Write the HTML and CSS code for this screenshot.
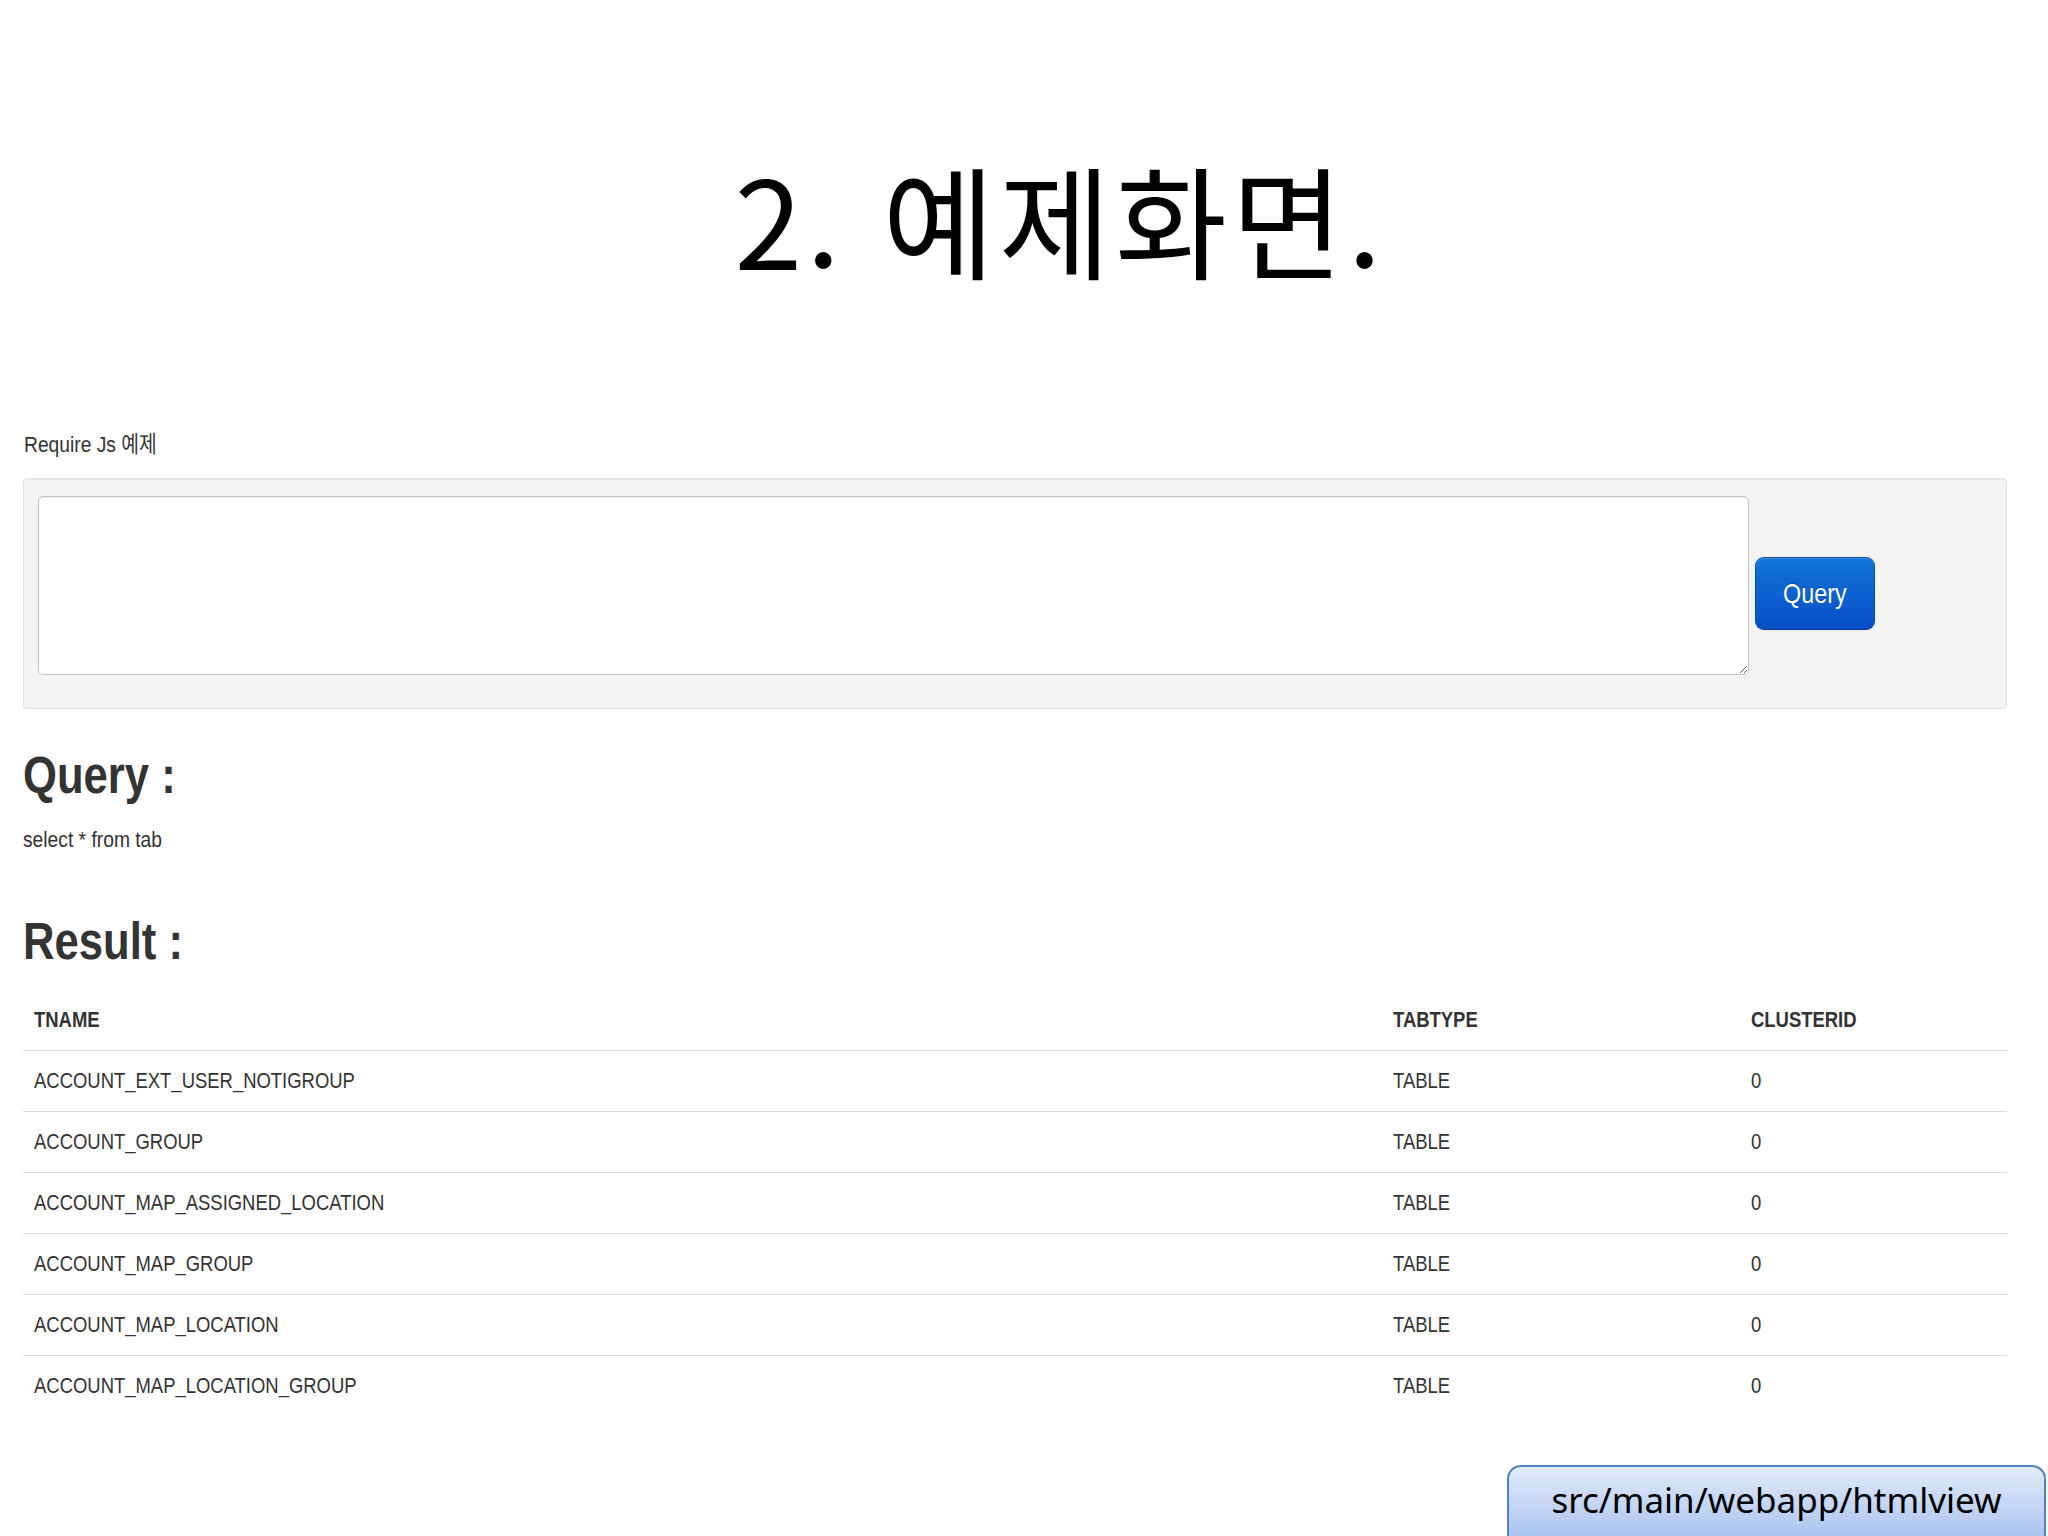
FILE: index.html
```html
<!DOCTYPE html>
<html lang="ko">
<head>
<meta charset="utf-8">
<title>2. 예제화면.</title>
<link rel="stylesheet" href="styles.css">
</head>
<body>
  <h1 class="slide-title">2. 예제화면.</h1>

  <div class="shot">
    <p class="intro"><span class="sq sq-w">Require Js 예제</span></p>

    <div class="well">
      <textarea class="query-input"></textarea>
      <button class="btn-query" type="button"><span class="sq sq-c">Query</span></button>
    </div>

    <h2 class="sec"><span class="sq sq-w">Query :</span></h2>
    <p class="sql"><span class="sq sq-w">select * from tab</span></p>

    <h2 class="sec result-title"><span class="sq sq-w">Result :</span></h2>
    <table class="result-table">
      <colgroup>
        <col class="c-name">
        <col class="c-type">
        <col class="c-id">
      </colgroup>
      <thead>
        <tr><th><span class="sq">TNAME</span></th><th><span class="sq">TABTYPE</span></th><th><span class="sq">CLUSTERID</span></th></tr>
      </thead>
      <tbody>
        <tr><td><span class="sq">ACCOUNT_EXT_USER_NOTIGROUP</span></td><td><span class="sq">TABLE</span></td><td><span class="sq">0</span></td></tr>
        <tr><td><span class="sq">ACCOUNT_GROUP</span></td><td><span class="sq">TABLE</span></td><td><span class="sq">0</span></td></tr>
        <tr><td><span class="sq">ACCOUNT_MAP_ASSIGNED_LOCATION</span></td><td><span class="sq">TABLE</span></td><td><span class="sq">0</span></td></tr>
        <tr><td><span class="sq">ACCOUNT_MAP_GROUP</span></td><td><span class="sq">TABLE</span></td><td><span class="sq">0</span></td></tr>
        <tr><td><span class="sq">ACCOUNT_MAP_LOCATION</span></td><td><span class="sq">TABLE</span></td><td><span class="sq">0</span></td></tr>
        <tr><td><span class="sq">ACCOUNT_MAP_LOCATION_GROUP</span></td><td><span class="sq">TABLE</span></td><td><span class="sq">0</span></td></tr>
      </tbody>
    </table>
  </div>

  <div class="callout">src/main/webapp/htmlview</div>
</body>
</html>
```

FILE: styles.css
```css
html {
  overflow: hidden;
  background: #fff;
}

body {
  margin: 0;
  position: relative;
  min-height: 1536px;
  font-family: "Liberation Sans", Arial, "Noto Sans CJK KR", sans-serif;
  color: #333;
  background: #fff;
}

.slide-title {
  margin: 144px 0 0;
  padding-left: 72px;
  text-align: center;
  font-family: "Noto Sans CJK KR", "Noto Sans", sans-serif;
  font-weight: 400;
  font-size: 122px;
  line-height: 146px;
  letter-spacing: 4px;
  color: #000;
}

/* the pasted browser screenshot is horizontally squeezed: text glyphs are narrowed */
.shot {
  margin: 139px 0 0 23px;
  width: 1984px;
  font-size: 22.5px;
  line-height: 32.4px;
}

.sq {
  display: inline-block;
  white-space: nowrap;
  transform: scaleX(0.82);
  transform-origin: 0 50%;
}

.sq-w {
  transform: scaleX(0.855);
}

.sq-c {
  transform-origin: 50% 50%;
}

.intro {
  margin: 0 0 17px 1px;
}

.well {
  display: flex;
  align-items: flex-start;
  padding: 17px 0 33px 14px;
  background: #f4f4f4;
  border: 1px solid #e3e3e3;
  border-radius: 4px;
  box-shadow: inset 0 1px 1px rgba(0, 0, 0, 0.05);
  margin-bottom: 34px;
}

.query-input {
  display: block;
  box-sizing: border-box;
  width: 1711px;
  height: 179px;
  margin: 0;
  padding: 6px;
  border: 1px solid #c4c4c4;
  border-radius: 5px;
  background: #fff;
  box-shadow: inset 0 1px 1px rgba(0, 0, 0, 0.075);
  font: inherit;
}

.btn-query {
  box-sizing: border-box;
  width: 120px;
  height: 73px;
  margin: 61px 0 0 6px;
  padding: 0;
  text-align: center;
  font-family: "Liberation Sans", Arial, sans-serif;
  font-size: 28.5px;
  line-height: 33px;
  color: #fff;
  background-color: #0a5fd0;
  background-image: linear-gradient(to bottom, #1274d9, #064ec6);
  border: 1px solid;
  border-color: #0a4fb8 #0a4fb8 #063c99;
  border-radius: 9px;
  text-shadow: 0 -1px 0 rgba(0, 0, 0, 0.25);
  box-shadow: inset 0 1px 0 rgba(255, 255, 255, 0.2), 0 1px 2px rgba(0, 0, 0, 0.05);
}

.sec {
  margin: 0;
  font-size: 51px;
  line-height: 65px;
  font-weight: bold;
  color: #333;
}

.sql {
  margin: 16px 0 0;
}

.result-title {
  margin-top: 52px;
}

.result-table {
  margin-top: 16px;
  width: 100%;
  table-layout: fixed;
  border-collapse: collapse;
  border-spacing: 0;
}

.c-name { width: 1359px; }
.c-type { width: 358px; }
.c-id { width: 267px; }

.result-table th,
.result-table td {
  padding: 14px 11px;
  line-height: 32px;
  text-align: left;
  vertical-align: top;
}

.result-table th {
  font-weight: bold;
  vertical-align: bottom;
}

.result-table td {
  border-top: 1px solid #dcdcdc;
}

.callout {
  position: absolute;
  left: 1507px;
  top: 1465px;
  box-sizing: border-box;
  width: 539px;
  height: 71px;
  padding-top: 11px;
  border: 2px solid #5382c0;
  border-bottom: 0;
  border-radius: 14px 14px 0 0;
  background: linear-gradient(to bottom, #e2ebfb, #abc5ef);
  font-family: "Noto Sans", "Open Sans", sans-serif;
  font-size: 35px;
  line-height: 44px;
  text-align: center;
  color: #000;
}
```
